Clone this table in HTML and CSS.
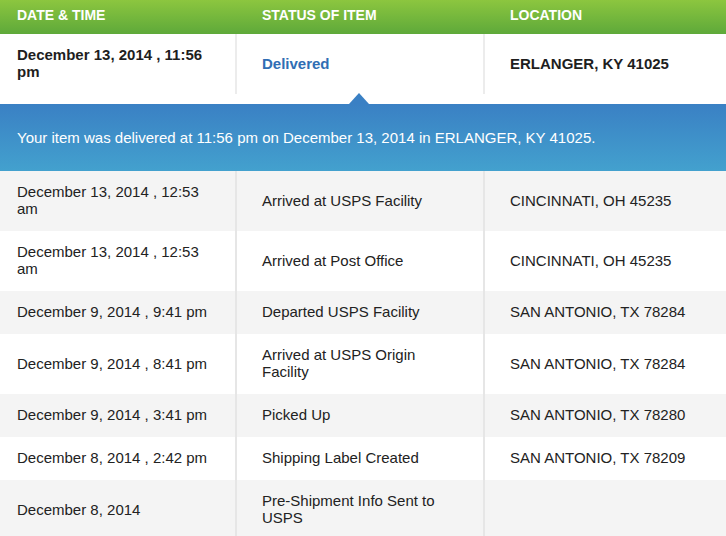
FILE: index.html
```html
<!DOCTYPE html>
<html>
<head>
<meta charset="utf-8">
<link rel="stylesheet" href="styles.css">
</head>
<body>
<div class="tracking">
  <div class="row head">
    <div class="cell">DATE &amp; TIME</div>
    <div class="cell">STATUS OF ITEM</div>
    <div class="cell">LOCATION</div>
  </div>
  <div class="row latest">
    <div class="cell">December 13, 2014 , 11:56 pm</div>
    <div class="cell status">Delivered</div>
    <div class="cell">ERLANGER, KY 41025</div>
  </div>
  <div class="detail">Your item was delivered at 11:56 pm on December 13, 2014 in ERLANGER, KY 41025.</div>
  <div class="row gray">
    <div class="cell">December 13, 2014 , 12:53 am</div>
    <div class="cell">Arrived at USPS Facility</div>
    <div class="cell">CINCINNATI, OH 45235</div>
  </div>
  <div class="row">
    <div class="cell">December 13, 2014 , 12:53 am</div>
    <div class="cell">Arrived at Post Office</div>
    <div class="cell">CINCINNATI, OH 45235</div>
  </div>
  <div class="row gray">
    <div class="cell">December 9, 2014 , 9:41 pm</div>
    <div class="cell">Departed USPS Facility</div>
    <div class="cell">SAN ANTONIO, TX 78284</div>
  </div>
  <div class="row">
    <div class="cell">December 9, 2014 , 8:41 pm</div>
    <div class="cell">Arrived at USPS Origin Facility</div>
    <div class="cell">SAN ANTONIO, TX 78284</div>
  </div>
  <div class="row gray">
    <div class="cell">December 9, 2014 , 3:41 pm</div>
    <div class="cell">Picked Up</div>
    <div class="cell">SAN ANTONIO, TX 78280</div>
  </div>
  <div class="row">
    <div class="cell">December 8, 2014 , 2:42 pm</div>
    <div class="cell">Shipping Label Created</div>
    <div class="cell">SAN ANTONIO, TX 78209</div>
  </div>
  <div class="row gray">
    <div class="cell">December 8, 2014</div>
    <div class="cell">Pre-Shipment Info Sent to USPS</div>
    <div class="cell"></div>
  </div>
</div>
</body>
</html>
```
FILE: styles.css
```css
html, body {
  margin: 0;
  padding: 0;
  background: #fff;
}
body {
  font-family: "Liberation Sans", Arial, sans-serif;
  font-size: 15px;
  line-height: 17px;
  color: #222;
  overflow: hidden;
}
.tracking {
  width: 726px;
}
.row {
  display: grid;
  grid-template-columns: 235px 248px 243px;
  background: #fff;
}
.row.gray {
  background: #f4f4f4;
}
.cell {
  box-sizing: border-box;
  padding: 12px 17px 14px;
  display: flex;
  align-items: center;
}
.cell + .cell {
  border-left: 2px solid #e6e6e6;
  padding-left: 25px;
}
.head {
  background: linear-gradient(to bottom, #8cc63f 0%, #5ea93a 100%);
}
.head .cell {
  height: 34px;
  padding-top: 7px;
  padding-bottom: 10px;
  font-size: 14px;
  font-weight: bold;
  color: #fff;
}
.head .cell + .cell {
  border-left-color: transparent;
}
.latest {
  font-weight: bold;
  color: #1e1e1e;
}
.latest .cell + .cell {
  border-left-color: #ececec;
}
.latest .status {
  color: #2f6eb4;
}
.detail {
  position: relative;
  margin-top: 10px;
  padding: 25px 17px;
  color: #fff;
  background: linear-gradient(to bottom, #3a80c4 0%, #43a1ce 100%);
}
.detail::before {
  content: "";
  position: absolute;
  left: 349px;
  top: -11px;
  border-left: 10px solid transparent;
  border-right: 10px solid transparent;
  border-bottom: 11px solid #3a80c4;
}
```
